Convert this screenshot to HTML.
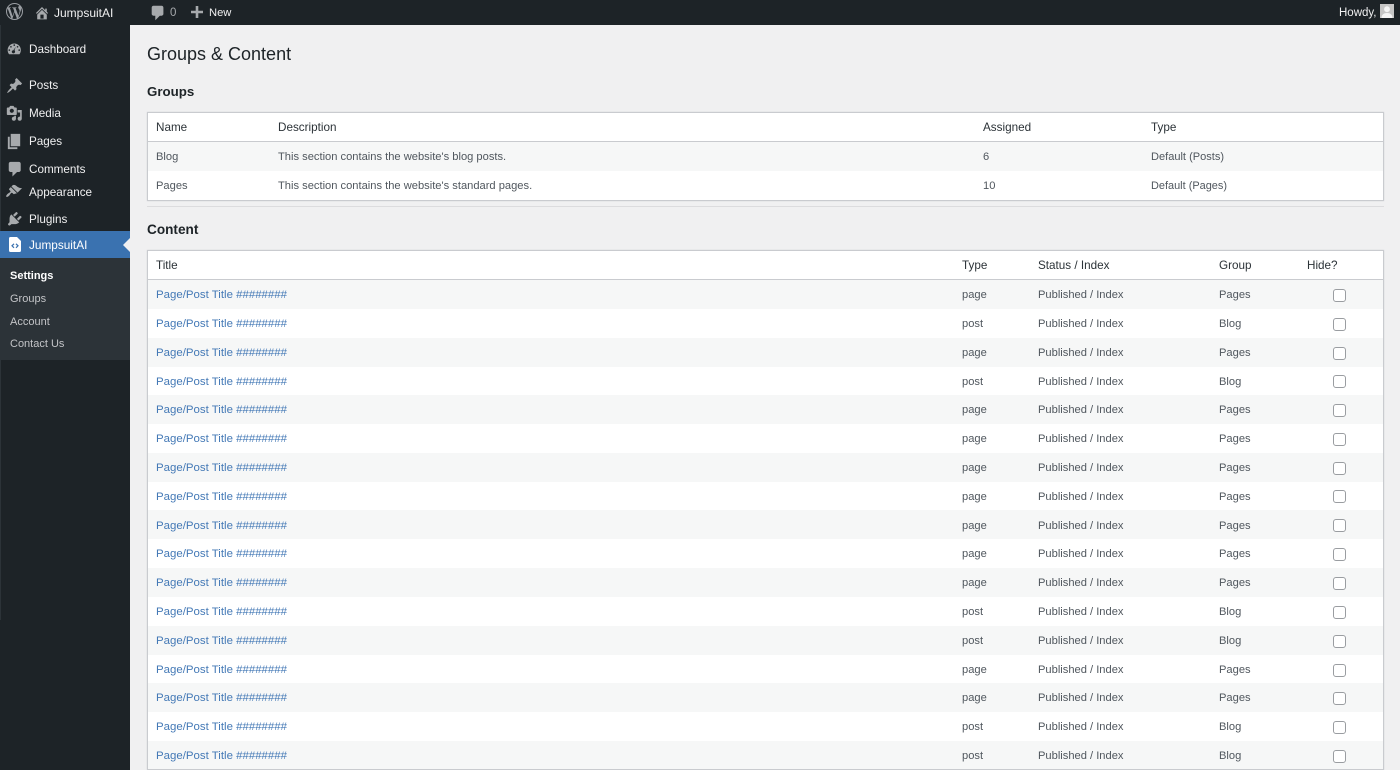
<!DOCTYPE html>
<html><head><meta charset="utf-8"><title>Groups &amp; Content</title>
<style>
html,body{margin:0;padding:0;width:1400px;height:770px;overflow:hidden;background:#f0f0f1;font-family:"Liberation Sans",sans-serif;}
#stage{position:relative;width:1400px;height:770px;overflow:hidden;background:#f0f0f1;}
.a{position:absolute;white-space:nowrap;}
svg{position:absolute;display:block;}
svg.i path{fill:#a7aaad;fill-rule:evenodd;}
#bar{left:0;top:0;width:1400px;height:25px;background:#1d2327;}
#side{left:0;top:25px;width:130px;height:745px;background:#1d2327;}
#edge{left:0;top:0;width:1px;height:620px;background:#2c3338;}
.t{color:#f0f0f1;font-size:12px;line-height:16px;}
.m{color:#f0f0f1;font-size:11.7px;line-height:16px;left:29px;}
.s{color:#c3c4c7;font-size:11px;line-height:16px;left:10px;}
.box{left:147px;width:1237px;background:#fff;border:1px solid #c9cbcf;box-sizing:border-box;box-shadow:0 0 1px #c9cbcf;}
.h{font-size:11.7px;line-height:16px;color:#2c3338;}
.c{font-size:11.15px;line-height:16px;color:#50575e;}
.l{font-size:11.45px;line-height:16px;color:#4479b6;left:156px;}
.st{left:148px;width:1235px;height:29px;background:#f6f7f7;}
.cb{left:1333px;width:13px;height:13px;background:#fff;border:1px solid #9a9da1;border-radius:3px;box-sizing:border-box;}
</style></head><body><div id="stage">

<div class="a" id="side"></div>
<div class="a" id="edge"></div>
<div class="a" id="bar"></div>

<!-- admin bar -->
<svg class="i" style="left:5.500px;top:3px" width="17" height="17" viewBox="0 0 20 20"><path style="fill:#9a9ea3" d="M10 0a10 10 0 1 0 0 20 10 10 0 0 0 0-20zM1.200 10c0-1.300.3-2.500.8-3.600l4.200 11.500A8.800 8.800 0 0 1 1.200 10zm8.800 8.800c-.9 0-1.700-.1-2.500-.4l2.600-7.700 2.700 7.500a8.800 8.800 0 0 1-2.800.6zm1.200-12.900c.5 0 1-.1 1-.1.500-.1.400-.8-.1-.7 0 0-1.400.1-2.300.1-.9 0-2.300-.1-2.300-.1-.5 0-.5.700-.1.700 0 0 .5.100.9.100l1.400 3.700-1.900 5.800-3.200-9.500c.5 0 1-.1 1-.1.500-.1.400-.8-.1-.7 0 0-1.400.1-2.300.1h-.6A8.800 8.800 0 0 1 10 1.200c2.300 0 4.400.9 6 2.300h-.1c-.9 0-1.500.8-1.500 1.600 0 .7.400 1.300.9 2.100.3.600.7 1.300.7 2.400 0 .7-.3 1.600-.6 2.700l-.8 2.700zm3.200 11.700l2.700-7.700c.5-1.300.7-2.300.7-3.200 0-.3 0-.6-.1-.9a8.800 8.800 0 0 1-3.300 11.800z"/></svg>
<svg class="i" style="left:34px;top:5px" width="16" height="16" viewBox="0 0 20 20"><path d="M16 8.500l1.530 1.530-1.060 1.060L10 4.620l-6.470 6.470-1.060-1.060L10 2.500l4 4v-2h2v4zm-6-2.460l6 5.990V18H4v-5.970zM12 17v-5H8v5h4z"/></svg>
<div class="a t" style="left:54px;top:5px">JumpsuitAI</div>
<svg class="i" style="left:148.500px;top:4px" width="18" height="18" viewBox="0 0 20 20"><path d="M5 2h9c1.100 0 2 .9 2 2v7c0 1.100-.9 2-2 2h-2l-5 5v-5H5c-1.100 0-2-.9-2-2V4c0-1.100.9-2 2-2z"/></svg>
<div class="a" style="left:170px;top:5px;font-size:11.5px;line-height:16px;color:#a7aaad">0</div>
<svg class="i" style="left:191px;top:6px" width="12" height="12" viewBox="0 0 12 12"><path d="M4.700 0h2.600v4.700H12v2.600H7.300V12H4.700V7.300H0V4.700h4.700z"/></svg>
<div class="a t" style="left:209px;top:5px;font-size:11.2px">New</div>
<div class="a t" style="left:1339px;top:5px;font-size:11.5px">Howdy,</div>
<div class="a" style="left:1380px;top:4px;width:14px;height:14px;background:#c6c6c6;overflow:hidden">
<svg style="left:0;top:0" width="14" height="14" viewBox="0 0 14 14"><circle cx="7" cy="5.200" r="2.900" fill="#f5f5f5"/><path fill="#f5f5f5" d="M1.500 14c0-3.500 2.500-5 5.500-5s5.500 1.500 5.500 5z"/></svg></div>

<!-- sidebar icons -->
<svg class="i" style="left:6.400px;top:40.500px" width="16.500" height="16.500" viewBox="0 0 20 20"><path d="M3.760 16h12.480c1.100-1.370 1.760-3.110 1.760-5 0-4.420-3.580-8-8-8s-8 3.580-8 8c0 1.890.66 3.630 1.760 5zM10 4c.55 0 1 .45 1 1s-.45 1-1 1-1-.45-1-1 .45-1 1-1zM6 6c.55 0 1 .45 1 1s-.45 1-1 1-1-.45-1-1 .45-1 1-1zm8 0c.55 0 1 .45 1 1s-.45 1-1 1-1-.45-1-1 .45-1 1-1zm-5.370 5.550L12 7l-1.800 4.080c.5.400.8 1.100.8 1.920 0 1.100-.9 2-2 2s-2-.9-2-2c0-.57.24-1.080.63-1.450zM4 10c.55 0 1 .45 1 1s-.45 1-1 1-1-.45-1-1 .45-1 1-1zm12 0c.55 0 1 .45 1 1s-.45 1-1 1-1-.45-1-1 .45-1 1-1z"/></svg>
<svg class="i" style="left:6px;top:77px" width="17.300" height="17.300" viewBox="0 0 20 20"><path d="M10.440 3.020l1.820-1.820 6.360 6.350-1.830 1.820c-1.050-.68-2.480-.57-3.410.36l-.75.75c-.92.93-1.040 2.350-.35 3.410l-1.830 1.820-2.410-2.410-2.800 2.790c-.42.42-3.380 2.710-3.800 2.290s1.860-3.390 2.280-3.810l2.790-2.790L4.100 9.360l1.830-1.820c1.050.69 2.480.57 3.400-.36l.75-.75c.93-.92 1.050-2.350.36-3.410z"/></svg>
<svg class="i" style="left:6px;top:105px" width="16.600" height="16.600" viewBox="0 0 20 20"><path d="M13 11V4c0-.55-.45-1-1-1h-1.670L9 1H5L3.670 3H2c-.55 0-1 .45-1 1v7c0 .55.45 1 1 1h10c.55 0 1-.45 1-1zM7 4.500c1.380 0 2.500 1.120 2.500 2.500S8.380 9.500 7 9.500 4.500 8.380 4.500 7 5.620 4.500 7 4.500zM14 6h5v10.500c0 1.380-1.120 2.500-2.500 2.500S14 17.880 14 16.500s1.120-2.500 2.500-2.500c.17 0 .34.020.5.050V9h-3V6zm-4 8.050V13h2v3.500c0 1.380-1.120 2.500-2.500 2.500S7 17.880 7 16.500 8.120 14 9.500 14c.17 0 .34.020.5.050z"/></svg>
<svg class="i" style="left:5px;top:132px" width="19" height="19" viewBox="0 0 20 20"><path d="M6 15V2h10v13H6zm-1 1h8v2H3V5h2v11z"/></svg>
<svg class="i" style="left:5.500px;top:160px" width="18.400" height="18.400" viewBox="0 0 20 20"><path d="M5 2h9c1.100 0 2 .9 2 2v7c0 1.100-.9 2-2 2h-2l-5 5v-5H5c-1.100 0-2-.9-2-2V4c0-1.100.9-2 2-2z"/></svg>
<svg class="i" style="left:5.300px;top:183px" width="17.400" height="17.400" viewBox="0 0 20 20"><path d="M14.480 11.060L7.410 3.990l1.500-1.500c.5-.56 2.300-.47 3.510.32 1.210.8 1.430 1.280 2.910 2.100 1.180.64 2.450 1.260 4.450.85zm-.71.71L6.700 4.700 4.930 6.470c-.39.39-.39 1.020 0 1.410l1.060 1.060c.39.39.39 1.030 0 1.420-.6.6-1.430 1.150-2.210 1.600-.78.44-1.380 1.270-1.740 1.710-.6.75-.95 1.680-.45 2.180s1.430.15 2.180-.45c.44-.36 1.270-.96 1.710-1.740.45-.78 1-1.610 1.600-2.210.39-.39 1.030-.39 1.420 0l1.060 1.060c.39.39 1.020.39 1.410 0z"/></svg>
<svg class="i" style="left:6px;top:210px" width="17.600" height="17.600" viewBox="0 0 20 20"><path d="M13.110 4.360L9.870 7.600 8 5.730l3.240-3.240c.35-.34 1.050-.2 1.560.32.52.51.66 1.210.31 1.550zm-8 1.770l.91-1.120 9.010 9.010-1.190.84c-.71.71-2.630 1.160-3.820 1.160H6.140L4.900 17.260c-.59.59-1.540.59-2.120 0-.59-.58-.59-1.530 0-2.120l1.240-1.240v-3.880c0-1.130.4-3.190 1.090-3.890zm7.260 3.970l3.240-3.240c.34-.35 1.040-.21 1.550.31.52.51.66 1.210.31 1.560l-3.240 3.240z"/></svg>

<!-- menu -->
<div class="a m" style="top:41px;line-height:17px">Dashboard</div>
<div class="a m" style="top:78px">Posts</div>
<div class="a m" style="top:106px">Media</div>
<div class="a m" style="top:134px">Pages</div>
<div class="a m" style="top:162px">Comments</div>
<div class="a m" style="top:185px">Appearance</div>
<div class="a m" style="top:212px">Plugins</div>
<div class="a" style="left:0;top:231px;width:130px;height:27px;background:#3a72b0"></div>
<svg style="left:123px;top:238px" width="7" height="14" viewBox="0 0 7 14"><path fill="#f0f0f1" d="M7 0v14L0 7z"/></svg>
<svg style="left:9px;top:237px" width="12" height="15" viewBox="0 0 12 15"><path fill="#fff" d="M1.500 0H8l4 4v9.500A1.500 1.500 0 0 1 10.500 15h-9A1.500 1.500 0 0 1 0 13.500v-12A1.500 1.500 0 0 1 1.500 0z"/><path fill="none" stroke="#3a72b0" stroke-width="1.200" d="M5 6.800 3 8.800l2 2M7 6.800l2 2-2 2"/></svg>
<div class="a m" style="top:237px;color:#fff;font-size:11.8px">JumpsuitAI</div>
<div class="a" style="left:0;top:258px;width:130px;height:102px;background:#2c3338"></div>
<div class="a s" style="top:268px;color:#fff;font-weight:bold">Settings</div>
<div class="a s" style="top:291px">Groups</div>
<div class="a s" style="top:314px">Account</div>
<div class="a s" style="top:336px">Contact Us</div>

<!-- headings -->
<div class="a" style="left:147px;top:41px;font-size:18px;line-height:26px;color:#1d2327">Groups &amp; Content</div>
<div class="a" style="left:147px;top:83px;font-size:13.300px;line-height:18px;font-weight:bold;color:#1d2327">Groups</div>
<div class="a" style="left:147px;top:221px;font-size:13.600px;line-height:18px;font-weight:bold;color:#1d2327">Content</div>

<!-- groups table -->
<div class="a box" style="top:112px;height:89px"></div>
<div class="a" style="left:148px;top:141px;width:1235px;height:1px;background:#c9cbcf"></div>
<div class="a st" style="top:142px"></div>
<div class="a h" style="left:156px;top:120px">Name</div>
<div class="a h" style="left:278px;top:120px">Description</div>
<div class="a h" style="left:983px;top:120px">Assigned</div>
<div class="a h" style="left:1151px;top:120px">Type</div>
<div class="a c" style="left:156px;top:149px">Blog</div>
<div class="a c" style="left:278px;top:149px">This section contains the website's blog posts.</div>
<div class="a c" style="left:983px;top:149px">6</div>
<div class="a c" style="left:1151px;top:149px;font-size:11.05px">Default (Posts)</div>
<div class="a c" style="left:156px;top:178px">Pages</div>
<div class="a c" style="left:278px;top:178px">This section contains the website's standard pages.</div>
<div class="a c" style="left:983px;top:178px">10</div>
<div class="a c" style="left:1151px;top:178px;font-size:10.95px">Default (Pages)</div>
<div class="a" style="left:147px;top:206px;width:1237px;height:1px;background:#dcdcde"></div>

<!-- content table -->
<div class="a box" style="top:250px;height:520px"></div>
<div class="a" style="left:148px;top:279px;width:1235px;height:1px;background:#c9cbcf"></div>
<div class="a h" style="left:156px;top:258px">Title</div>
<div class="a h" style="left:962px;top:258px">Type</div>
<div class="a h" style="left:1038px;top:258px">Status / Index</div>
<div class="a h" style="left:1219px;top:258px">Group</div>
<div class="a h" style="left:1307px;top:258px">Hide?</div>

<div class="a st" style="top:280px"></div>
<div class="a l" style="top:287px">Page/Post Title ########</div><div class="a c" style="left:962px;top:287px">page</div><div class="a c" style="left:1038px;top:287px">Published / Index</div><div class="a c" style="left:1219px;top:287px">Pages</div><div class="a cb" style="top:289px"></div>

<div class="a l" style="top:316px">Page/Post Title ########</div><div class="a c" style="left:962px;top:316px">post</div><div class="a c" style="left:1038px;top:316px">Published / Index</div><div class="a c" style="left:1219px;top:316px">Blog</div><div class="a cb" style="top:318px"></div>

<div class="a st" style="top:338px"></div>
<div class="a l" style="top:345px">Page/Post Title ########</div><div class="a c" style="left:962px;top:345px">page</div><div class="a c" style="left:1038px;top:345px">Published / Index</div><div class="a c" style="left:1219px;top:345px">Pages</div><div class="a cb" style="top:347px"></div>

<div class="a l" style="top:374px">Page/Post Title ########</div><div class="a c" style="left:962px;top:374px">post</div><div class="a c" style="left:1038px;top:374px">Published / Index</div><div class="a c" style="left:1219px;top:374px">Blog</div><div class="a cb" style="top:375px"></div>

<div class="a st" style="top:395px"></div>
<div class="a l" style="top:402px">Page/Post Title ########</div><div class="a c" style="left:962px;top:402px">page</div><div class="a c" style="left:1038px;top:402px">Published / Index</div><div class="a c" style="left:1219px;top:402px">Pages</div><div class="a cb" style="top:404px"></div>

<div class="a l" style="top:431px">Page/Post Title ########</div><div class="a c" style="left:962px;top:431px">page</div><div class="a c" style="left:1038px;top:431px">Published / Index</div><div class="a c" style="left:1219px;top:431px">Pages</div><div class="a cb" style="top:433px"></div>

<div class="a st" style="top:453px"></div>
<div class="a l" style="top:460px">Page/Post Title ########</div><div class="a c" style="left:962px;top:460px">page</div><div class="a c" style="left:1038px;top:460px">Published / Index</div><div class="a c" style="left:1219px;top:460px">Pages</div><div class="a cb" style="top:462px"></div>

<div class="a l" style="top:489px">Page/Post Title ########</div><div class="a c" style="left:962px;top:489px">page</div><div class="a c" style="left:1038px;top:489px">Published / Index</div><div class="a c" style="left:1219px;top:489px">Pages</div><div class="a cb" style="top:490px"></div>

<div class="a st" style="top:510px"></div>
<div class="a l" style="top:518px">Page/Post Title ########</div><div class="a c" style="left:962px;top:518px">page</div><div class="a c" style="left:1038px;top:518px">Published / Index</div><div class="a c" style="left:1219px;top:518px">Pages</div><div class="a cb" style="top:519px"></div>

<div class="a l" style="top:546px">Page/Post Title ########</div><div class="a c" style="left:962px;top:546px">page</div><div class="a c" style="left:1038px;top:546px">Published / Index</div><div class="a c" style="left:1219px;top:546px">Pages</div><div class="a cb" style="top:548px"></div>

<div class="a st" style="top:568px"></div>
<div class="a l" style="top:575px">Page/Post Title ########</div><div class="a c" style="left:962px;top:575px">page</div><div class="a c" style="left:1038px;top:575px">Published / Index</div><div class="a c" style="left:1219px;top:575px">Pages</div><div class="a cb" style="top:577px"></div>

<div class="a l" style="top:604px">Page/Post Title ########</div><div class="a c" style="left:962px;top:604px">post</div><div class="a c" style="left:1038px;top:604px">Published / Index</div><div class="a c" style="left:1219px;top:604px">Blog</div><div class="a cb" style="top:606px"></div>

<div class="a st" style="top:626px"></div>
<div class="a l" style="top:633px">Page/Post Title ########</div><div class="a c" style="left:962px;top:633px">post</div><div class="a c" style="left:1038px;top:633px">Published / Index</div><div class="a c" style="left:1219px;top:633px">Blog</div><div class="a cb" style="top:635px"></div>

<div class="a l" style="top:662px">Page/Post Title ########</div><div class="a c" style="left:962px;top:662px">page</div><div class="a c" style="left:1038px;top:662px">Published / Index</div><div class="a c" style="left:1219px;top:662px">Pages</div><div class="a cb" style="top:664px"></div>

<div class="a st" style="top:683px"></div>
<div class="a l" style="top:690px">Page/Post Title ########</div><div class="a c" style="left:962px;top:690px">page</div><div class="a c" style="left:1038px;top:690px">Published / Index</div><div class="a c" style="left:1219px;top:690px">Pages</div><div class="a cb" style="top:692px"></div>

<div class="a l" style="top:719px">Page/Post Title ########</div><div class="a c" style="left:962px;top:719px">post</div><div class="a c" style="left:1038px;top:719px">Published / Index</div><div class="a c" style="left:1219px;top:719px">Blog</div><div class="a cb" style="top:721px"></div>

<div class="a st" style="top:741px;height:28px"></div>
<div class="a l" style="top:748px">Page/Post Title ########</div><div class="a c" style="left:962px;top:748px">post</div><div class="a c" style="left:1038px;top:748px">Published / Index</div><div class="a c" style="left:1219px;top:748px">Blog</div><div class="a cb" style="top:750px"></div>

</div></body></html>
